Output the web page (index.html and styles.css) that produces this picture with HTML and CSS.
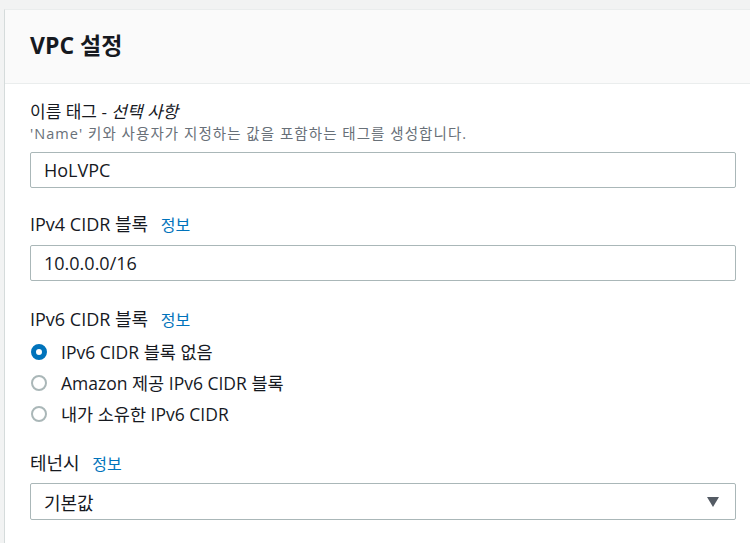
FILE: index.html
```html
<!DOCTYPE html>
<html lang="ko">
<head>
<meta charset="utf-8">
<link rel="stylesheet" href="styles.css">
</head>
<body>
<div class="card">
  <div class="card-header">
    <h2 class="title">VPC 설정</h2>
  </div>
  <div class="card-body">
    <div class="field">
      <div class="label label-name">이름 태그 - <i>선택 사항</i></div>
      <div class="desc">'Name' 키와 사용자가 지정하는 값을 포함하는 태그를 생성합니다.</div>
      <div class="input">HoLVPC</div>
    </div>
    <div class="field">
      <div class="label">IPv4 CIDR 블록 <span class="info">정보</span></div>
      <div class="input">10.0.0.0/16</div>
    </div>
    <div class="field field-ipv6">
      <div class="label">IPv6 CIDR 블록 <span class="info">정보</span></div>
      <div class="radios">
        <div class="radio"><span class="dot checked"></span>IPv6 CIDR 블록 없음</div>
        <div class="radio"><span class="dot"></span>Amazon 제공 IPv6 CIDR 블록</div>
        <div class="radio"><span class="dot"></span>내가 소유한 IPv6 CIDR</div>
      </div>
    </div>
    <div class="field field-tenancy">
      <div class="label">테넌시 <span class="info">정보</span></div>
      <div class="input select">기본값<span class="caret"></span></div>
    </div>
  </div>
</div>
</body>
</html>
```
FILE: styles.css
```css
html, body {
  margin: 0;
  padding: 0;
  background: #f2f3f3;
  font-family: "Open Sans", "Noto Sans CJK KR", sans-serif;
  color: #16191f;
  overflow: hidden;
  height: 543px;
}
.card {
  margin: 9px 0 0 4px;
  background: #ffffff;
  border-left: 1px solid #d5dbdb;
  border-top: 1px solid #eaeded;
  height: 600px;
}
.card-header {
  background: #fafafa;
  border-bottom: 1px solid #eaeded;
  height: 73px;
  display: flex;
  align-items: center;
  padding-left: 25px;
}
.title {
  margin: 0 0 4px 0;
  font-size: 23px;
  font-weight: 700;
  line-height: 28px;
}
.card-body {
  padding: 16px 14px 0 25px;
  display: flex;
  flex-direction: column;
  gap: 24px;
}
.field {
  display: flex;
  flex-direction: column;
}
.field-ipv6 { margin-top: 2px; }
.field-tenancy { margin-top: -2px; }
.field-tenancy .label { margin-bottom: 7px; }
.label {
  font-size: 18px;
  line-height: 24px;
  margin-bottom: 8px;
}
.label-name { font-size: 17px; }
.label i { font-style: italic; }
.desc {
  font-size: 14.5px;
  letter-spacing: 1.05px;
  line-height: 18px;
  color: #687078;
  margin-top: -7px;
  margin-bottom: 9px;
}
.info {
  color: #0073bb;
  font-size: 16px;
  margin-left: 8px;
}
.input {
  height: 34px;
  border: 1px solid #aab7b8;
  border-radius: 2px;
  padding: 0 13px;
  display: flex;
  align-items: center;
  font-size: 18px;
  background: #fff;
}
.select {
  justify-content: space-between;
  height: 35px;
}
.caret {
  width: 0;
  height: 0;
  border-left: 6px solid transparent;
  border-right: 6px solid transparent;
  border-top: 10px solid #545b64;
  margin-right: 3px;
}
.radios {
  display: flex;
  flex-direction: column;
  margin-top: -4px;
}
.radio {
  display: flex;
  align-items: center;
  height: 31px;
  font-size: 17.5px;
}
.dot {
  width: 16px;
  height: 16px;
  box-sizing: border-box;
  border: 2px solid #aab7b8;
  border-radius: 50%;
  margin-right: 14px;
  margin-left: 1px;
}
.dot.checked {
  border: 5px solid #0073bb;
}
```
